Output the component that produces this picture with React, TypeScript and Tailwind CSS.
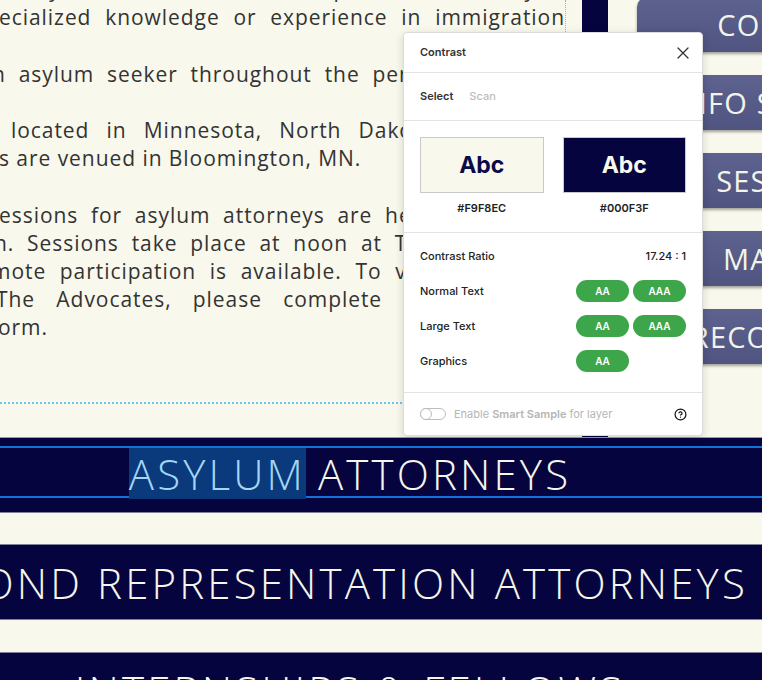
const NAVY = 'bg-[#05043f]'

const lines = [
  { t: 'attorneys. Volunteers are not required to have any', c: 'text-justify [text-align-last:justify] ml-[-30px]' },
  { t: 'ecialized knowledge or experience in immigration', c: 'text-justify [text-align-last:justify] ml-[-1px]' },
  { t: '', c: '' },
  { t: 'n asylum seeker throughout the pendency of the', c: 'text-justify [text-align-last:justify] ml-[-8px]' },
  { t: '', c: '' },
  { t: 'located in Minnesota, North Dakota, and South', c: 'text-justify [text-align-last:justify] ml-[11px]' },
  { t: 's are venued in Bloomington, MN.', c: 'ml-[-1px]' },
  { t: '', c: '' },
  { t: 'essions for asylum attorneys are held monthly in', c: 'text-justify [text-align-last:justify] ml-[-1px]' },
  { t: 'n. Sessions take place at noon at The Advocates\u2019', c: 'text-justify [text-align-last:justify] ml-[-6px]' },
  { t: 'mote participation is available. To volunteer with', c: 'text-justify [text-align-last:justify] ml-[-9px]' },
  { t: 'The Advocates, please complete the volunteer', c: 'text-justify [text-align-last:justify] ml-[-4px]' },
  { t: 'orm.', c: 'ml-[-2px]' },
]

const buttons = ['CONTACT', 'INFO SESSIONS', 'SESSIONS', 'MANUAL', 'RECORDINGS']

function Pill({ label }: { label: string }) {
  return (
    <span className="w-[53px] h-[22px] rounded-full bg-[#3ea64a] text-white text-[10px] font-semibold flex items-center justify-center">
      {label}
    </span>
  )
}

function ResultRow({ label, pills }: { label: string; pills: string[] }) {
  return (
    <div className="h-[22px] flex items-center justify-between">
      <span className="text-[11px] font-medium text-[#222]">{label}</span>
      <div className="flex gap-[4px] w-[110px]">
        {pills.map((p) => (
          <Pill key={p} label={p} />
        ))}
      </div>
    </div>
  )
}

function ContrastPanel() {
  return (
    <div className="absolute left-[403px] top-[32px] w-[300px] h-[404px] bg-white rounded-[4px] border border-[#dcdcdc] shadow-[0_2px_8px_rgba(0,0,0,0.15)] font-['Inter',sans-serif] flex flex-col">
      <div className="h-[40px] shrink-0 flex items-center justify-between pl-4 pr-[12px] border-b border-[#e3e3e3]">
        <span className="text-[11px] font-semibold text-[#333]">Contrast</span>
        <svg width="14" height="14" viewBox="0 0 14 14" fill="none" stroke="#333" strokeWidth="1.3" strokeLinecap="round">
          <path d="M2 2l10 10M12 2L2 12" />
        </svg>
      </div>
      <div className="h-[48px] shrink-0 flex items-center gap-[16px] px-4 border-b border-[#e3e3e3] text-[11px] font-semibold">
        <span className="text-[#333]">Select</span>
        <span className="text-[#bdbdbd] font-medium">Scan</span>
      </div>
      <div className="grid grid-cols-2 gap-[19px] px-4 pt-[16px] pb-[17px] border-b border-[#e3e3e3]">
        <div className="flex flex-col items-center">
          <div className="w-full h-[56px] border border-[#c9c9c9] bg-[#F9F8EC] flex items-center justify-center text-[23px] font-bold text-[#0b0a4a]">
            Abc
          </div>
          <span className="mt-[8px] text-[11px] leading-[14px] font-semibold text-[#222]">#F9F8EC</span>
        </div>
        <div className="flex flex-col items-center">
          <div className="w-full h-[56px] border border-[#c9c9c9] bg-[#05043f] flex items-center justify-center text-[23px] font-bold text-[#F9F8EC]">
            Abc
          </div>
          <span className="mt-[8px] text-[11px] leading-[14px] font-semibold text-[#222]">#000F3F</span>
        </div>
      </div>
      <div className="px-4 pt-[12px] pb-[20px] flex flex-col gap-[13px] border-b border-[#e3e3e3]">
        <div className="h-[22px] flex items-center justify-between text-[11px] font-medium text-[#222]">
          <span>Contrast Ratio</span>
          <span>17.24 : 1</span>
        </div>
        <ResultRow label="Normal Text" pills={['AA', 'AAA']} />
        <ResultRow label="Large Text" pills={['AA', 'AAA']} />
        <ResultRow label="Graphics" pills={['AA']} />
      </div>
      <div className="flex-1 flex items-center justify-between px-4 pr-[15px]">
        <div className="flex items-center gap-[8px] text-[11px] text-[#b5b5b5]">
          <div className="relative w-[26px] h-[12px] rounded-full border border-[#bdbdbd]">
            <div className="absolute left-[-1px] top-[-1px] w-[12px] h-[12px] rounded-full border border-[#bdbdbd] bg-white" />
          </div>
          <span>
            Enable <span className="font-semibold">Smart Sample</span> for layer
          </span>
        </div>
        <svg width="13" height="13" viewBox="0 0 24 24" fill="none" stroke="#111" strokeWidth="2.2" strokeLinecap="round" strokeLinejoin="round">
          <circle cx="12" cy="12" r="10" />
          <path d="M9.09 9a3 3 0 0 1 5.83 1c0 2-3 3-3 3" />
          <path d="M12 17h.01" />
        </svg>
      </div>
    </div>
  )
}

function Band({ children, className = '' }: { children: React.ReactNode; className?: string }) {
  return (
    <div className={`relative h-[74px] shrink-0 ${NAVY} flex ${className}`}>
      <div className="w-[700px] shrink-0 flex justify-center whitespace-nowrap text-[42px] font-light tracking-[0.075em] text-[#f6f5ea] font-['Open_Sans',sans-serif]">
        {children}
      </div>
    </div>
  )
}

export default function App() {
  return (
    <div className="relative w-[762px] h-[680px] overflow-hidden bg-[#F9F8EC] flex flex-col">
      <div className="h-[438px] shrink-0 flex items-start border-b border-[#9a9a9a]">
        <div className="w-[566px] h-[404px] shrink-0 overflow-hidden border-r border-b-2 border-dotted border-[#6cc3f0]">
          <div className="-mt-[25px] font-['Open_Sans',sans-serif] text-[21px] tracking-[0.045em] text-[#333] whitespace-nowrap">
            {lines.map((l, i) => (
              <div key={i} className={`h-[28.2px] leading-[28.2px] w-[566px] ${l.c}`}>
                {l.t}
              </div>
            ))}
          </div>
        </div>
        <div className={`ml-[16px] w-[26px] h-full shrink-0 ${NAVY}`} />
        <div className="ml-[29px] -mt-[3px] flex flex-col gap-[23px]">
          {buttons.map((b) => (
            <div
              key={b}
              className="w-[300px] h-[55px] rounded-l-[10px] bg-gradient-to-b from-[#5d628f] to-[#4f5480] shadow-[0_2px_3px_rgba(0,0,0,0.35)] flex items-center justify-center text-[29px] text-[#f4f3ea] tracking-[0.04em] font-['Open_Sans',sans-serif] whitespace-nowrap"
            >
              {b}
            </div>
          ))}
        </div>
      </div>

      <Band className="pt-[10px]">
        <div className="absolute left-0 right-0 top-[8px] h-[2px] bg-[#1272d8]" />
        <div className="absolute left-0 right-0 top-[58px] h-[2px] bg-[#1272d8]" />
        <span className="relative inline-block h-[51px] leading-[51px] bg-[#0a3a7c] text-[#a4d6f4]">ASYLUM</span>
        <span className="inline-block h-[51px] leading-[51px] ml-[12px]">ATTORNEYS</span>
      </Band>
      <div className="h-[33px] shrink-0 border-y border-[#7f8199]" />
      <Band className="items-center">
        <span>BOND REPRESENTATION ATTORNEYS</span>
      </Band>
      <div className="h-[34px] shrink-0 border-y border-[#7f8199]" />
      <Band className="items-center">
        <span>INTERNSHIPS &amp; FELLOWS</span>
      </Band>

      <ContrastPanel />
    </div>
  )
}
